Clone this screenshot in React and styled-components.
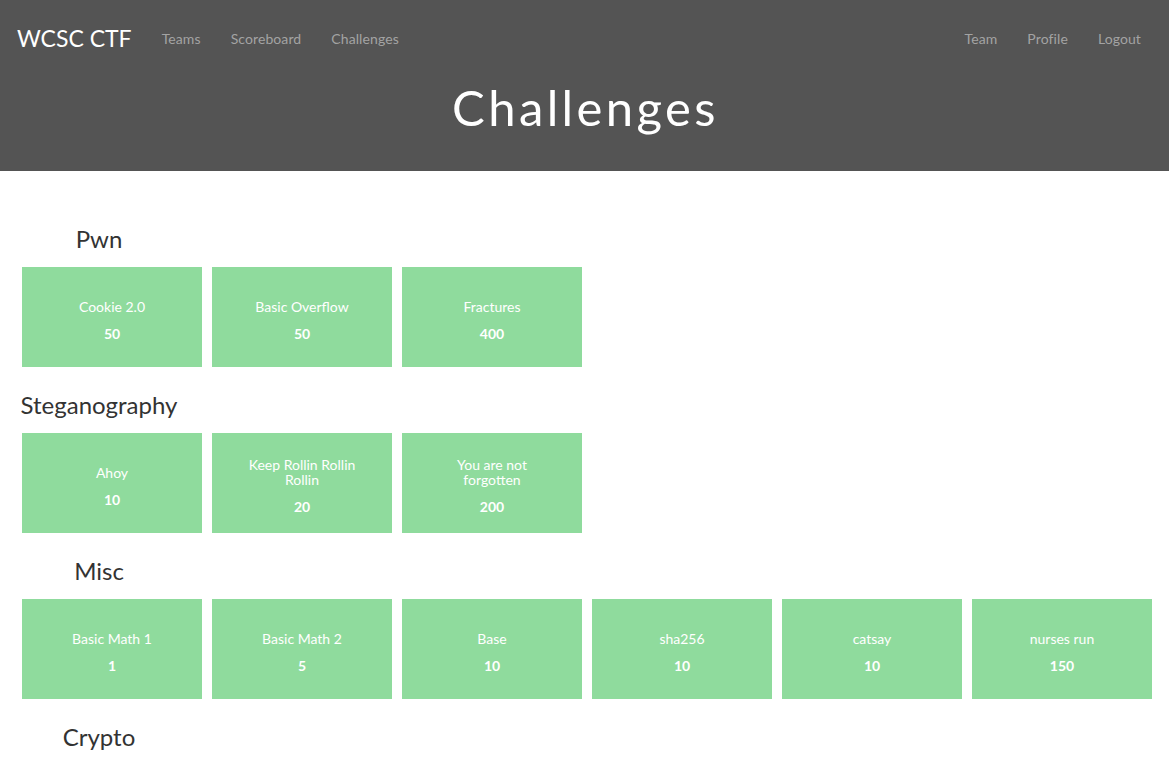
import React from 'react';
import styled, { createGlobalStyle } from 'styled-components';

const GlobalStyle = createGlobalStyle`
  html, body {
    margin: 0;
    padding: 0;
    background: #ffffff;
    font-family: Lato, "Open Sans", sans-serif;
    color: #333333;
  }
`;

const Jumbotron = styled.header`
  background-color: #545454;
  height: 171px;
  display: flex;
  flex-direction: column;
`;

const Navbar = styled.nav`
  display: flex;
  align-items: center;
  height: 78px;
  padding: 0 13px 0 17px;
`;

const Brand = styled.a`
  color: #ffffff;
  font-size: 23px;
  line-height: 24px;
  margin-right: 15px;
  margin-top: -2px;
`;

const NavList = styled.ul`
  display: flex;
  list-style: none;
  margin: 0;
  padding: 0;
  margin-left: ${({ right }) => (right ? 'auto' : '0')};
`;

const NavLink = styled.li`
  color: #a3a3a3;
  font-size: 14px;
  letter-spacing: 0.1px;
  padding: 0 15px;
  line-height: 20px;
`;

const Title = styled.h1`
  margin: 0;
  text-align: center;
  color: #ffffff;
  font-family: Lato, sans-serif;
  font-weight: 400;
  font-size: 49px;
  letter-spacing: 3.4px;
  line-height: 60px;
  margin-top: -1px;
  padding-left: 2px;
`;

const Content = styled.main`
  padding: 52px 0 0 22px;
`;

const Category = styled.section`
  margin-bottom: 22px;
`;

const CategoryTitle = styled.h3`
  margin: 0 0 12px -13px;
  width: 180px;
  text-align: center;
  font-weight: 400;
  font-size: 24px;
  line-height: 32px;
  color: #333333;
`;

const CardRow = styled.div`
  display: flex;
  gap: 10px;
`;

const Card = styled.div`
  width: 180px;
  height: 100px;
  background-color: #8fdb9d;
  color: #ffffff;
  display: flex;
  flex-direction: column;
  align-items: center;
  justify-content: center;
  text-align: center;
  box-sizing: border-box;
  padding: 0 30px;
`;

const CardName = styled.div`
  font-size: 14px;
  line-height: 15px;
  margin-top: 5px;
`;

const CardPoints = styled.div`
  font-size: 14px;
  font-weight: 700;
  line-height: 15px;
  margin-top: 12px;
`;

const categories = [
  {
    name: 'Pwn',
    challenges: [
      ['Cookie 2.0', 50],
      ['Basic Overflow', 50],
      ['Fractures', 400],
    ],
  },
  {
    name: 'Steganography',
    challenges: [
      ['Ahoy', 10],
      ['Keep Rollin Rollin Rollin', 20],
      ['You are not forgotten', 200],
    ],
  },
  {
    name: 'Misc',
    challenges: [
      ['Basic Math 1', 1],
      ['Basic Math 2', 5],
      ['Base', 10],
      ['sha256', 10],
      ['catsay', 10],
      ['nurses run', 150],
    ],
  },
  {
    name: 'Crypto',
    challenges: [],
  },
];

const App = () => (
  <>
    <GlobalStyle />
    <Jumbotron>
      <Navbar>
        <Brand>WCSC CTF</Brand>
        <NavList>
          <NavLink>Teams</NavLink>
          <NavLink>Scoreboard</NavLink>
          <NavLink>Challenges</NavLink>
        </NavList>
        <NavList right>
          <NavLink>Team</NavLink>
          <NavLink>Profile</NavLink>
          <NavLink>Logout</NavLink>
        </NavList>
      </Navbar>
      <Title>Challenges</Title>
    </Jumbotron>
    <Content>
      {categories.map((cat) => (
        <Category key={cat.name}>
          <CategoryTitle>{cat.name}</CategoryTitle>
          <CardRow>
            {cat.challenges.map(([name, points]) => (
              <Card key={name}>
                <CardName>{name}</CardName>
                <CardPoints>{points}</CardPoints>
              </Card>
            ))}
          </CardRow>
        </Category>
      ))}
    </Content>
  </>
);

export default App;
